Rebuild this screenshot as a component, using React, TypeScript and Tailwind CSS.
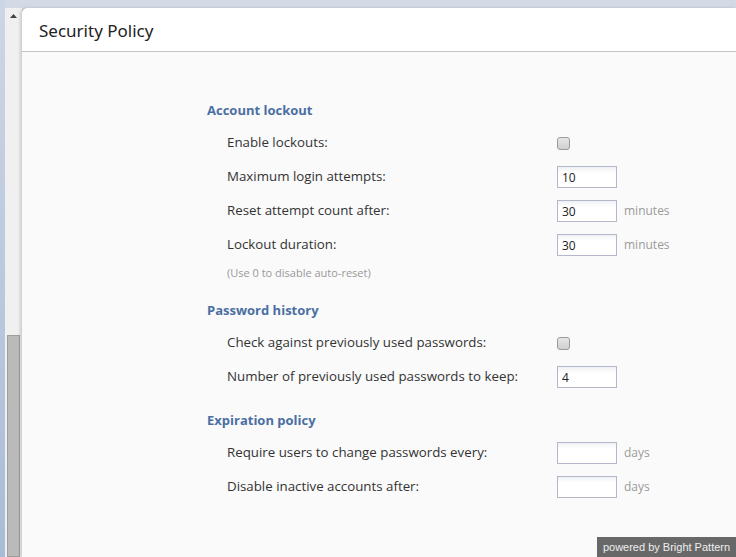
import React from "react";

const font = { fontFamily: '"Open Sans", "Noto Sans", sans-serif' };

function TextBox({ value }: { value?: string }) {
  return (
    <input
      type="text"
      defaultValue={value}
      className="w-[60px] h-[22px] border border-[#b3b7c9] bg-gradient-to-b from-[#eef1f3] to-white to-[30%] px-[4px] text-[12px] text-[#222] outline-none"
      style={font}
    />
  );
}

function Check() {
  return (
    <span className="block w-[13px] h-[13px] rounded-[3px] border border-[#9a9a9a] bg-gradient-to-b from-[#e6e6e6] to-[#d0d0d0]" />
  );
}

function Row({ label, children, unit }: { label: string; children: React.ReactNode; unit?: string }) {
  return (
    <div className="flex items-center h-[34px]">
      <div className="w-[350px] pl-[20px] text-[13.3px] text-[#333]">{label}</div>
      <div className="w-[67px] flex items-center">{children}</div>
      {unit && <div className="text-[12px] text-[#9a9a9a]">{unit}</div>}
    </div>
  );
}

function Heading({ children, className }: { children: React.ReactNode; className?: string }) {
  return (
    <div className={"h-[20px] flex items-center text-[13px] font-bold text-[#4b6fa3] " + (className ?? "")}>
      {children}
    </div>
  );
}

export default function App() {
  return (
    <div
      className="relative w-[736px] h-[557px] overflow-hidden bg-gradient-to-b from-[#d3dae5] to-[#c9d3e2] flex"
      style={font}
    >
      {/* left edge strip */}
      <div className="w-[5px] h-full bg-gradient-to-b from-[#cdd6e4] to-[#a9bcd7]" />

      {/* scrollbar */}
      <div className="mt-[8px] w-[17px] bg-[#f0f0f0] flex flex-col items-center">
        <div className="h-[16px] flex items-center justify-center">
          <svg width="7" height="4" viewBox="0 0 7 4">
            <path d="M0 4 L3.5 0 L7 4 Z" fill="#444" />
          </svg>
        </div>
        <div className="flex-1" />
        <div className="w-[13px] h-[222px] bg-[#bababa] border border-[#9e9e9e]" />
      </div>

      {/* panel */}
      <div className="mt-[8px] flex-1 flex flex-col bg-[#fafafa] rounded-tl-[6px] shadow-[-2px_0_3px_rgba(0,0,0,0.15)]">
        <div className="h-[44px] bg-white rounded-tl-[6px] border-b border-[#c4c4c4] flex items-center pl-[17px] pt-[3px]">
          <span className="text-[17px] text-[#222]" style={{ fontFamily: '"Noto Sans", "Open Sans", sans-serif' }}>
            Security Policy
          </span>
        </div>

        <div className="pl-[185px] pt-[49px] flex flex-col">
          <Heading>Account lockout</Heading>
          <div className="h-[5px]" />
          <Row label="Enable lockouts:">
            <Check />
          </Row>
          <Row label="Maximum login attempts:">
            <TextBox value="10" />
          </Row>
          <Row label="Reset attempt count after:" unit="minutes">
            <TextBox value="30" />
          </Row>
          <Row label="Lockout duration:" unit="minutes">
            <TextBox value="30" />
          </Row>
          <div className="h-[16px] mt-[3px] pl-[20px] flex items-center text-[11px] text-[#999]">
            (Use 0 to disable auto-reset)
          </div>

          <Heading className="mt-[20px]">Password history</Heading>
          <div className="h-[5px]" />
          <Row label="Check against previously used passwords:">
            <Check />
          </Row>
          <Row label="Number of previously used passwords to keep:">
            <TextBox value="4" />
          </Row>

          <Heading className="mt-[17px]">Expiration policy</Heading>
          <div className="h-[5px]" />
          <Row label="Require users to change passwords every:" unit="days">
            <TextBox />
          </Row>
          <Row label="Disable inactive accounts after:" unit="days">
            <TextBox />
          </Row>
        </div>
      </div>

      {/* footer badge */}
      <div
        className="absolute right-0 bottom-0 w-[139px] h-[20px] bg-[#686868] text-[#eee] text-[11px] flex items-center justify-center"
        style={{ fontFamily: '"Liberation Sans", Arial, sans-serif' }}
      >
        powered by Bright Pattern
      </div>
    </div>
  );
}
